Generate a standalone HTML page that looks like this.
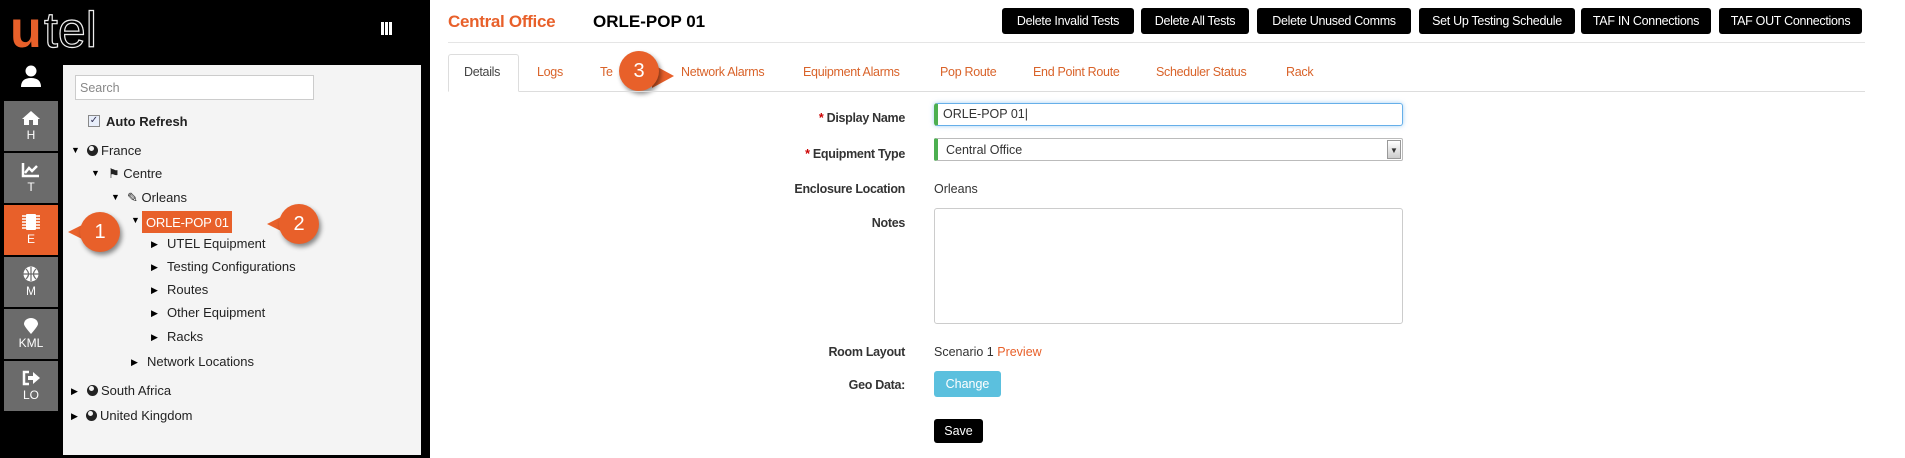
<!DOCTYPE html>
<html><head><meta charset="utf-8"><style>
*{box-sizing:border-box;margin:0;padding:0}
body{width:1905px;height:458px;background:#fff;font-family:"Liberation Sans",Arial,sans-serif;position:relative;overflow:hidden;color:#333}
.a{position:absolute}
.side{left:0;top:0;width:430px;height:458px;background:#000}
.nav{left:4px;width:54px;height:50px;background:#6b6b6b;color:#fff;text-align:center;font-size:12px}
.nav svg{display:block;margin:9px auto 2px}
.tree{left:63px;top:65px;width:358px;height:390px;background:#f4f4f4}
.t{font-size:13px;color:#222;white-space:nowrap}
.tri{font-size:9px;color:#000}
.g{display:inline-block;width:11px;height:11px;border-radius:50%;background:#222;vertical-align:-1px;margin-right:3px;position:relative;overflow:hidden}
.g:after{content:"";position:absolute;left:2px;top:1px;width:5px;height:5px;border-radius:50%;background:#f4f4f4}
.btn{top:8px;height:26px;background:#000;color:#fff;font-size:12.5px;border-radius:3px;text-align:center;line-height:26px;letter-spacing:-.3px;white-space:nowrap}
.tab{top:65px;font-size:12.5px;color:#d9632a;letter-spacing:-.3px}
.lbl{right:1000px;font-size:12.5px;font-weight:bold;color:#333;text-align:right;letter-spacing:-.3px}
.req{color:#c00}
.badge{width:40px;height:40px;border-radius:50%;background:#e8602a;color:#fff;font-size:20px;text-align:center;line-height:40px;box-shadow:2px 3px 5px rgba(0,0,0,.45)}
</style></head><body>
<div class="a side"></div>
<svg class="a" style="left:10px;top:6px" width="110" height="46"><text x="0" y="41" font-family="Liberation Sans" font-size="52" font-weight="bold" fill="#e8602a">u</text><text x="34" y="41" font-family="Liberation Sans" font-size="50" fill="none" stroke="#eee" stroke-width="1.2">tel</text></svg>
<div class="a" style="left:381px;top:22px;width:11px;height:13px;border-left:3px solid #fff;border-right:3px solid #fff"><div style="margin:0 auto;width:3px;height:13px;background:#fff"></div></div>
<svg class="a" style="left:20px;top:65px" width="22" height="22" viewBox="0 0 22 22"><circle cx="11" cy="6" r="5.5" fill="#fff"/><path d="M1 22 Q1 13 11 13 Q21 13 21 22Z" fill="#fff"/></svg>

<div class="a nav" style="top:101px"><svg width="20" height="16" viewBox="0 0 20 16"><path d="M10 1 L1 9 L3 9 L3 15 L8 15 L8 10 L12 10 L12 15 L17 15 L17 9 L19 9Z" fill="#fff"/></svg>H</div>
<div class="a nav" style="top:153px"><svg width="20" height="16" viewBox="0 0 20 16"><path d="M2 1 V14 H18" stroke="#fff" stroke-width="2.5" fill="none"/><path d="M4 11 L8 6 L11 9 L16 4" stroke="#fff" stroke-width="2.5" fill="none"/></svg>T</div>
<div class="a nav" style="top:205px;background:#e8602a"><svg width="20" height="16" viewBox="0 0 20 16"><rect x="5" y="0" width="10" height="16" rx="1" fill="#fff"/><path d="M1 2H19M1 5H19M1 8H19M1 11H19M1 14H19" stroke="#fff" stroke-width="1.5"/></svg>E</div>
<div class="a nav" style="top:257px"><svg width="20" height="16" viewBox="0 0 20 16"><circle cx="10" cy="8" r="7.5" fill="#fff"/><path d="M2 8H18M10 1V15M5 3Q10 8 5 13M15 3Q10 8 15 13" stroke="#6b6b6b" stroke-width="1.2" fill="none"/></svg>M</div>
<div class="a nav" style="top:309px"><svg width="20" height="16" viewBox="0 0 20 16"><path d="M10 16 Q3 8 3 6 A7 6 0 0 1 17 6 Q17 8 10 16Z" fill="#fff"/></svg>KML</div>
<div class="a nav" style="top:361px"><svg width="20" height="16" viewBox="0 0 20 16"><path d="M8 2H3V14H8" stroke="#fff" stroke-width="2.5" fill="none"/><path d="M7 6H12V2L19 8L12 14V10H7Z" fill="#fff"/></svg>LO</div>

<div class="a tree"></div>
<div class="a" style="left:75px;top:75px;width:239px;height:25px;border:1px solid #ccc;background:#fff;font-size:12.5px;color:#888;padding:5px 4px">Search</div>
<div class="a" style="left:88px;top:115px;width:12px;height:12px;border:1px solid #888;background:#e8eefa;font-size:10px;color:#335;line-height:10px;text-align:center">✓</div>
<div class="a t" style="left:106px;top:114px;font-weight:bold">Auto Refresh</div>

<div class="a tri" style="left:71px;top:145px">▼</div><div class="a t" style="left:87px;top:143px"><span class="g"></span>France</div>
<div class="a tri" style="left:91px;top:168px">▼</div><div class="a t" style="left:108px;top:166px">⚑ Centre</div>
<div class="a tri" style="left:111px;top:192px">▼</div><div class="a t" style="left:127px;top:190px">✎ Orleans</div>
<div class="a tri" style="left:131px;top:215px">▼</div>
<div class="a" style="left:142px;top:211px;width:90px;height:22px;background:#e8602a;color:#fff;font-size:13px;padding:4px 4px;white-space:nowrap;letter-spacing:-.2px">ORLE-POP 01</div>
<div class="a tri" style="left:151px;top:239px">▶</div><div class="a t" style="left:167px;top:236px">UTEL Equipment</div>
<div class="a tri" style="left:151px;top:262px">▶</div><div class="a t" style="left:167px;top:259px">Testing Configurations</div>
<div class="a tri" style="left:151px;top:285px">▶</div><div class="a t" style="left:167px;top:282px">Routes</div>
<div class="a tri" style="left:151px;top:308px">▶</div><div class="a t" style="left:167px;top:305px">Other Equipment</div>
<div class="a tri" style="left:151px;top:332px">▶</div><div class="a t" style="left:167px;top:329px">Racks</div>
<div class="a tri" style="left:131px;top:357px">▶</div><div class="a t" style="left:147px;top:354px">Network Locations</div>
<div class="a tri" style="left:71px;top:386px">▶</div><div class="a t" style="left:87px;top:383px"><span class="g"></span>South Africa</div>
<div class="a tri" style="left:71px;top:411px">▶</div><div class="a t" style="left:86px;top:408px"><span class="g"></span>United Kingdom</div>

<!-- callouts -->
<svg class="a" style="left:66px;top:210px" width="60" height="44"><path d="M2 22 L22 12 L22 32Z" fill="#e8602a"/></svg>
<div class="a badge" style="left:80px;top:212px">1</div>
<svg class="a" style="left:265px;top:202px" width="60" height="44"><path d="M2 22 L22 12 L22 32Z" fill="#e8602a"/></svg>
<div class="a badge" style="left:279px;top:204px">2</div>
<svg class="a" style="left:640px;top:50px" width="40" height="44"><path d="M34 26 L12 14 L12 38Z" fill="#e8602a"/></svg>
<div class="a badge" style="left:619px;top:51px">3</div>

<!-- header -->
<div class="a" style="left:448px;top:12px;font-size:17px;font-weight:bold;color:#e8602a;letter-spacing:-.3px">Central Office</div>
<div class="a" style="left:593px;top:12px;font-size:17px;font-weight:bold;color:#000">ORLE-POP 01</div>
<div class="a btn" style="left:1002px;width:132px">Delete Invalid Tests</div>
<div class="a btn" style="left:1141px;width:108px">Delete All Tests</div>
<div class="a btn" style="left:1257px;width:154px">Delete Unused Comms</div>
<div class="a btn" style="left:1419px;width:156px">Set Up Testing Schedule</div>
<div class="a btn" style="left:1581px;width:130px">TAF IN Connections</div>
<div class="a btn" style="left:1719px;width:143px">TAF OUT Connections</div>
<div class="a" style="left:448px;top:42px;width:1417px;height:1px;background:#e5e5e5"></div>
<div class="a" style="left:448px;top:91px;width:1417px;height:1px;background:#ddd"></div>
<div class="a" style="left:448px;top:54px;width:71px;height:38px;border:1px solid #ddd;border-bottom:1px solid #fff;background:#fff;border-radius:3px 3px 0 0"></div>
<div class="a tab" style="left:464px;color:#444">Details</div>
<div class="a tab" style="left:537px">Logs</div>
<div class="a tab" style="left:600px">Te</div>
<div class="a tab" style="left:681px">Network Alarms</div>
<div class="a tab" style="left:803px">Equipment Alarms</div>
<div class="a tab" style="left:940px">Pop Route</div>
<div class="a tab" style="left:1033px">End Point Route</div>
<div class="a tab" style="left:1156px">Scheduler Status</div>
<div class="a tab" style="left:1286px">Rack</div>

<!-- form -->
<div class="a lbl" style="top:111px"><span class="req">*</span> Display Name</div>
<div class="a" style="left:934px;top:103px;width:469px;height:23px;border:1px solid #66afe9;border-left:4px solid #4caf50;border-radius:3px;box-shadow:0 0 5px rgba(102,175,233,.6);font-size:12.5px;padding:3px 5px;color:#333">ORLE-POP 01|</div>
<div class="a lbl" style="top:147px"><span class="req">*</span> Equipment Type</div>
<div class="a" style="left:934px;top:138px;width:469px;height:23px;border:1px solid #bbb;border-left:4px solid #4caf50;border-radius:2px;font-size:12.5px;padding:4px 8px;color:#333">Central Office
<div class="a" style="right:1px;top:1px;width:14px;height:19px;border:1px solid #999;background:linear-gradient(#fff,#ccc);font-size:8px;text-align:center;line-height:19px">▼</div></div>
<div class="a lbl" style="top:182px">Enclosure Location</div>
<div class="a" style="left:934px;top:182px;font-size:12.5px">Orleans</div>
<div class="a lbl" style="top:216px">Notes</div>
<div class="a" style="left:934px;top:208px;width:469px;height:116px;border:1px solid #ccc;border-radius:3px"></div>
<div class="a lbl" style="top:345px">Room Layout</div>
<div class="a" style="left:934px;top:345px;font-size:12.5px">Scenario 1 <span style="color:#e8602a">Preview</span></div>
<div class="a lbl" style="top:378px">Geo Data:</div>
<div class="a" style="left:934px;top:371px;width:67px;height:26px;background:#5bc0de;border-radius:3px;color:#fff;font-size:12.5px;text-align:center;line-height:26px">Change</div>
<div class="a" style="left:934px;top:419px;width:49px;height:24px;background:#000;border-radius:3px;color:#fff;font-size:12.5px;text-align:center;line-height:24px">Save</div>
</body></html>
